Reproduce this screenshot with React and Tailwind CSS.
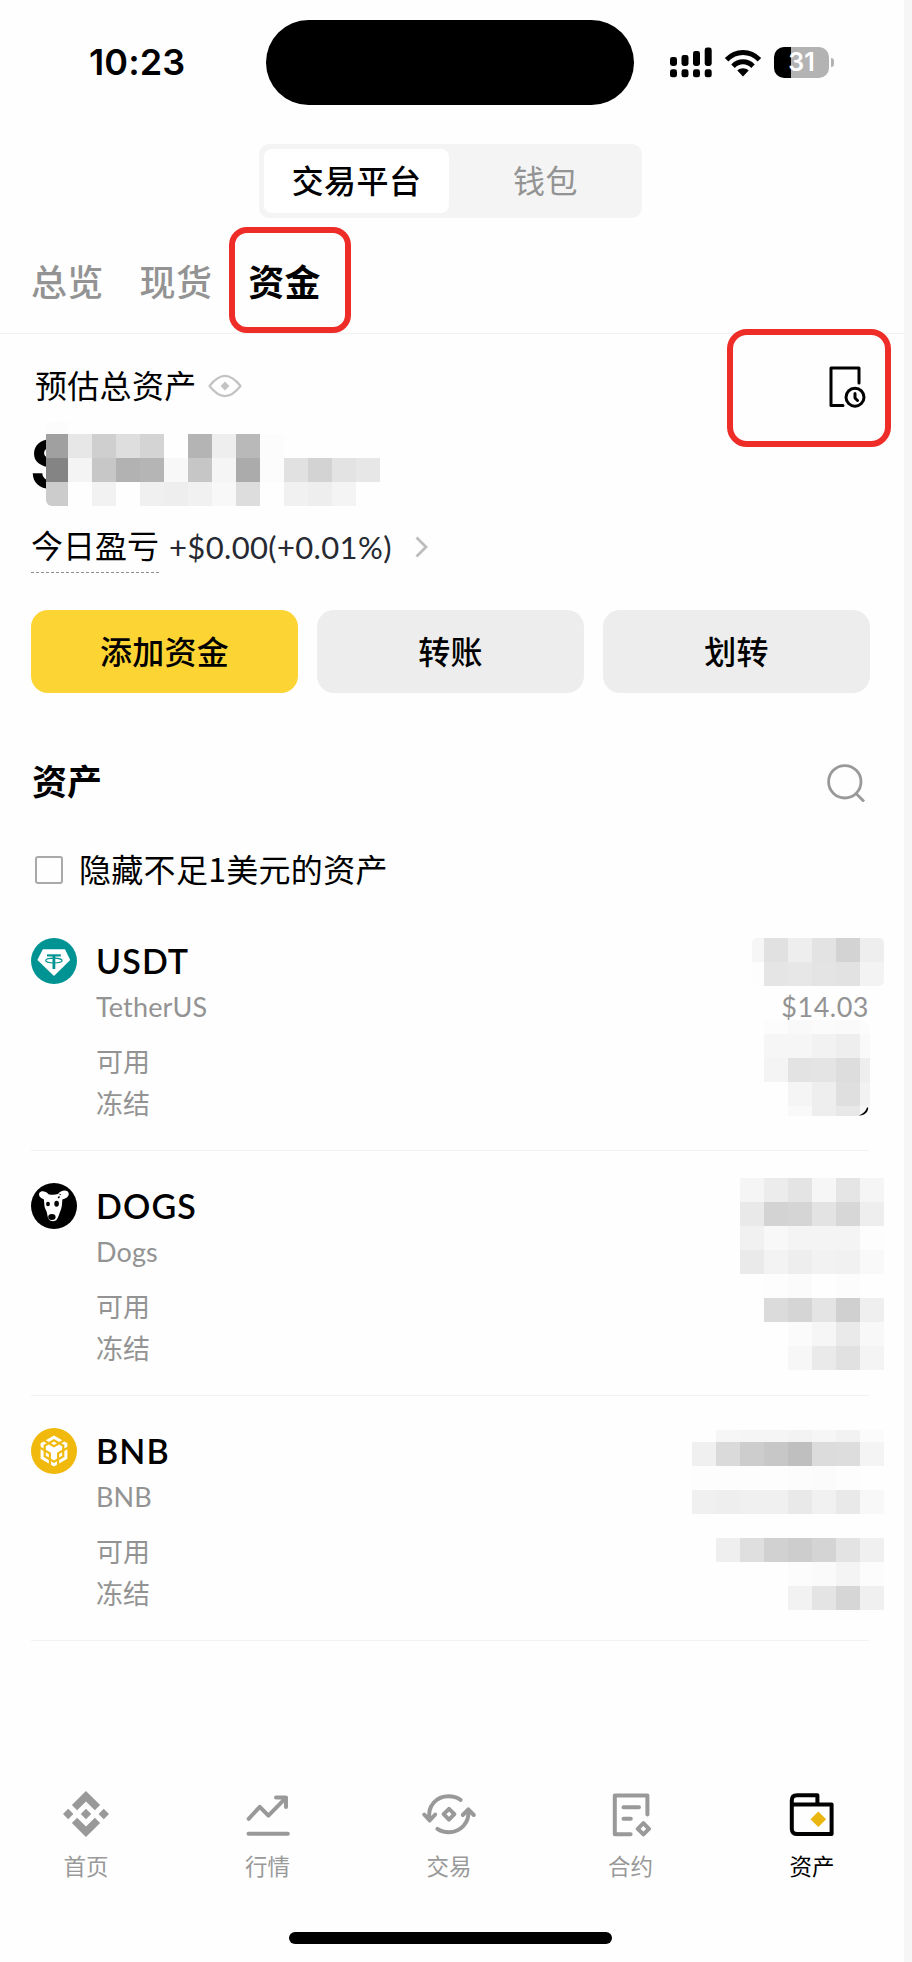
const CJK = 'font-["Noto_Sans_CJK_SC",sans-serif]';
const LATIN = 'font-["Lato","Noto_Sans_CJK_SC",sans-serif]';

// Each mosaic is a list of rows: [height, [[width, grey level or null], ...]]
const w24 = (levels) => levels.map((level) => [24, level]);

const BALANCE_MOSAIC = [
  [12, [[22, 252]]],
  [24, [[22, 160], ...w24([231, 207, 222, 212, null, 180, 238, 185, 252])]],
  [24, [[22, 132], ...w24([244, 199, 178, 181, 248, 198, 245, 171, 252, 225, 211, 227, 231])]],
  [24, [[22, 204], ...w24([254, 242, null, 240, 238, 241, 248, 221, null, 241, 238, 244])]],
];

const USDT_TOP = [
  [24, [[12, 246], ...w24([225, 238, 227, 211, 238])]],
  [24, [[12, 253], ...w24([229, 231, 228, 226, 243])]],
];

const USDT_BOTTOM = [
  [14, [...w24([252, 249, 251, 250]), [10, 252]]],
  [24, [...w24([246, 246, 242, 238]), [10, 249]]],
  [24, [...w24([244, 227, 228, 221]), [10, 238]]],
  [24, [...w24([null, 245, 238, 223]), [10, 242]]],
  [10, [...w24([null, 249, 238, 232]), [10, 246]]],
];

const DOGS_MOSAIC = [
  [24, w24([245, 236, 228, 246, 229, 245])],
  [24, w24([233, 211, 213, 227, 215, 238])],
  [24, w24([241, 248, 244, 244, 244, 253])],
  [24, w24([234, 243, 238, 242, 241, 249])],
  [24, w24([null, 253, 251, 254, 252, 254])],
  [24, w24([null, 219, 213, 228, 208, 239])],
  [24, w24([null, null, 251, 246, 234, 248])],
  [24, w24([null, null, 247, 234, 225, 244])],
];

const BNB_MOSAIC = [
  [12, w24([null, 246, 245, 245, 243, 246, 242, 251])],
  [24, w24([240, 218, 205, 199, 191, 220, 221, 244])],
  [24, w24([253, 253, 253, 253, 252, 251, 253, 254])],
  [24, w24([240, 238, 240, 240, 233, 241, 233, 248])],
  [24, w24([null])],
  [24, w24([null, 239, 223, 209, 205, 212, 227, 240])],
  [24, w24([null, 254, 254, 254, 252, 250, 244, 252])],
  [24, w24([null, null, null, null, 242, 228, 214, 240])],
];

function Mosaic({ rows, className }) {
  return (
    <div className={className}>
      {rows.map(([height, cells], r) => (
        <div key={r} className="flex" style={{ height }}>
          {cells.map(([width, level], c) => (
            <span
              key={c}
              className="block h-full shrink-0"
              style={{ width, backgroundColor: level === null ? undefined : `rgb(${level},${level},${level})` }}
            />
          ))}
        </div>
      ))}
    </div>
  );
}

function StatusBar() {
  return (
    <header className="flex h-[125px] items-center">
      <div className='w-[266px] pb-[2px] pl-[89px] font-["Inter",sans-serif] text-[36px] leading-none font-semibold tracking-[0.1px]'>10:23</div>
      <div className="h-[85px] w-[368px] rounded-full bg-black" />
      <svg className="ml-[36px]" width="42" height="31" viewBox="0 0 42 31">
        <rect x="0" y="10" width="7" height="9" rx="2.4" />
        <rect x="11.5" y="8" width="7" height="11" rx="2.4" />
        <rect x="23" y="4" width="7" height="15" rx="2.4" />
        <rect x="34.7" y="0.5" width="7" height="18.5" rx="2.4" />
        <rect x="0" y="22.3" width="7" height="8" rx="2.4" />
        <rect x="11.5" y="22.3" width="7" height="8" rx="2.4" />
        <rect x="23" y="22.3" width="7" height="8" rx="2.4" />
        <rect x="34.7" y="22.3" width="7" height="8" rx="2.4" />
      </svg>
      <svg className="ml-[12px]" width="38" height="28" viewBox="0 0 38 28" fill="none" stroke="#000" strokeWidth="5">
        <path d="M2.6 10.8C12 1.2 26 1.2 35.4 10.8" />
        <path d="M9 17.2C14.8 11.4 23.2 11.4 29 17.2" />
        <path d="M19 27.5L13.3 21.4C16.5 18.4 21.5 18.4 24.7 21.4Z" fill="#000" stroke="none" />
      </svg>
      <div className='ml-[12px] flex h-[31px] w-[55px] items-center justify-center rounded-[10px] bg-[linear-gradient(90deg,#000_31%,#b3b3b3_31%)] pb-[1px] font-["Inter",sans-serif] text-[25px] leading-none font-semibold text-white'>
        31
      </div>
      <div className="ml-[2px] h-[9px] w-[3px] rounded-r-full bg-[#b3b3b3]" />
    </header>
  );
}

function Segment() {
  return (
    <div className="mt-[19px] ml-[259px] flex h-[74px] w-[383px] rounded-[10px] bg-[#f4f4f4] py-[5px] pl-[5px] text-[32px] leading-none tracking-[0.4px]">
      <div className="flex w-[185px] items-center justify-center rounded-[8px] bg-white pb-[5px] font-medium">交易平台</div>
      <div className="flex flex-1 items-center justify-center pb-[5px] text-[#939393]">钱包</div>
    </div>
  );
}

function Tabs() {
  return (
    <nav className="flex h-[116px] items-center gap-[36px] border-b border-[#f1f1f1] pt-[9px] pl-[31px] text-[36px] leading-none font-medium tracking-[0.3px] text-[#939393]">
      <span>总览</span>
      <span>现货</span>
      <span className="relative font-bold text-black">
        资金
        <i className="absolute -top-[35px] -left-[19px] h-[106px] w-[122px] rounded-[18px] border-[6px] border-[#ef2d28]" />
      </span>
    </nav>
  );
}

function Balance() {
  return (
    <section className="relative">
      <div className="flex h-[100px] items-center pt-[4px] pl-[35px] text-[32px] leading-none">
        <span className="pb-[4px] tracking-[0.3px]">预估总资产</span>
        <svg className="ml-[11px]" width="34" height="24" viewBox="0 0 34 24" fill="none" stroke="#c3c3c3" strokeWidth="2.2">
          <path d="M1.5 12C7 5 11 1.9 17 1.9S27 5 32.5 12C27 19 23 22.1 17 22.1S7 19 1.5 12Z" strokeLinejoin="round" />
          <path d="M17 7.6L21.4 12L17 16.4L12.6 12Z" fill="#c3c3c3" stroke="none" />
        </svg>
        <svg className="mt-[2px] ml-[587px]" width="38" height="42" viewBox="0 0 38 42" fill="none" stroke="#000" strokeWidth="3" strokeLinecap="round" strokeLinejoin="round">
          <path d="M14 39.5H2V2H30V17" />
          <circle cx="26" cy="31.2" r="9" />
          <path d="M26 27.5V32L28.5 34.5" />
        </svg>
      </div>
      <i className="absolute -top-[5px] left-[727px] h-[118px] w-[164px] rounded-[20px] border-[6px] border-[#ef2d28]" />
      <div className="relative h-[72px]">
        <span className='block pl-[30px] font-["Inter",sans-serif] text-[66px] leading-[61px] font-bold'>$</span>
        <div className="absolute -top-[12px] left-[46px] h-[94px] w-[40px] bg-[#fefefe]" />
        <Mosaic rows={BALANCE_MOSAIC} className="absolute -top-[12px] left-[46px] overflow-hidden rounded-l-[6px]" />
      </div>
      <div className="flex h-[78px] items-center pl-[31px]">
        <span className="mt-[10px] border-b border-dashed border-[#8c8c8c] pb-[12px] text-[32px] leading-[32px]">今日盈亏</span>
        <span className='mt-[4px] ml-[10px] font-["Lato",sans-serif] text-[31px] leading-none tracking-[0.35px] text-[#262932]'>+$0.00(+0.01%)</span>
        <svg className="mt-[4px] ml-[23px]" width="14" height="22" viewBox="0 0 14 22" fill="none" stroke="#bdbdbd" strokeWidth="2.8">
          <path d="M1.5 1.5L11 11L1.5 20.5" />
        </svg>
      </div>
      <div className="mt-[26px] flex gap-[19px] pl-[31px] text-[32px] leading-none font-medium tracking-[0.2px]">
        <button className="h-[83px] w-[267px] rounded-[17px] bg-[#fcd434] pb-[4px]">添加资金</button>
        <button className="h-[83px] w-[267px] rounded-[17px] bg-[#ededed] pb-[4px]">转账</button>
        <button className="h-[83px] w-[267px] rounded-[17px] bg-[#ededed] pb-[4px]">划转</button>
      </div>
    </section>
  );
}

function TetherIcon() {
  return (
    <svg width="46" height="46" viewBox="0 0 46 46">
      <circle cx="23" cy="23" r="23" fill="#009393" />
      <path d="M11.8 11.3H34L39.2 22L23 38L6.4 22Z" fill="#fff" />
      <g stroke="#009393" fill="none">
        <path d="M16 17.4H29.8" strokeWidth="2.2" />
        <path d="M22.9 17V31" strokeWidth="2.8" />
        <ellipse cx="22.9" cy="22.6" rx="8.2" ry="2.4" strokeWidth="1.2" />
      </g>
    </svg>
  );
}

function DogsIcon() {
  return (
    <svg width="46" height="46" viewBox="0 0 46 46">
      <circle cx="23" cy="23" r="23" />
      <path
        d="M8.3 10C10 7.4 14.5 8 17.5 11.2C21 12 24 11.8 27 11C29 8 33.5 6.5 36.5 8.2C39 10.5 37.5 14 34.5 15.2C33 15.8 32 16 31.4 16.6C31 20 31.2 23.5 29.8 27C28.4 30 27.8 33.5 25.8 36.5C24 38.8 19.5 38.8 17.6 36C16 33 16.5 29.5 14.6 26.5C13 23.5 13.4 19.5 12.8 16.2C9.5 15.5 7.2 12.6 8.3 10Z"
        fill="#fff"
      />
      <ellipse cx="17" cy="21" rx="1.9" ry="2.3" />
      <ellipse cx="25.6" cy="20.7" rx="2.3" ry="3" />
      <ellipse cx="20.9" cy="34" rx="3.7" ry="3" />
      <path d="M27.3 15.2L28.4 13.4M28.8 11.7L29.4 11" stroke="#000" strokeWidth="1.5" />
    </svg>
  );
}

function BnbIcon() {
  return (
    <svg width="46" height="46" viewBox="0 0 46 46">
      <circle cx="23" cy="23" r="23" fill="#f0b90b" />
      <g transform="translate(7.5 7.5) scale(1.29)" fill="#fff">
        <path d="M5.631 3.676L12.001 0l6.367 3.676-2.34 1.358L12 2.716 7.972 5.034l-2.34-1.358z" />
        <path d="M18.368 8.312l-2.34-1.358L12 9.272 7.972 6.954l-2.34 1.358v2.716l4.026 2.318v4.636L12 19.341l2.341-1.359v-4.636l4.027-2.318V8.312z" />
        <path d="M18.368 15.664v-2.716l-2.34 1.358v2.716l2.34-1.358z" />
        <path d="M20.031 16.624l-4.027 2.318v2.717l6.368-3.677V10.63l-2.34 1.358v4.636z" />
        <path d="M17.691 5.994l2.34 1.358v2.716l2.341-1.358V5.994l-2.34-1.358-2.342 1.358z" />
        <path d="M9.657 19.926v2.716L12 24l2.341-1.358v-2.716l-2.34 1.358-2.343-1.358z" />
        <path d="M5.631 15.664l2.34 1.358v-2.716l-2.34-1.358v2.716z" />
        <path d="M9.657 5.994L12 7.352l2.341-1.358L12 4.636 9.657 5.994z" />
        <path d="M3.967 7.352l2.342-1.358-2.341-1.358-2.34 1.358v2.716l2.34 1.358V7.352z" />
        <path d="M3.967 11.988L1.627 10.63v7.352l6.368 3.677v-2.717L3.967 16.624v-4.636z" />
      </g>
    </svg>
  );
}

function Asset({ icon, symbol, name, amount, children }) {
  return (
    <li className="relative ml-[31px] flex h-[245px] w-[838px] border-b border-[#f2f2f2] pt-[32px]">
      {icon}
      <div className={`ml-[19px] flex flex-1 flex-col text-[27px] text-[#939393] ${LATIN}`}>
        <span className="h-[46px] text-[34px] leading-[46px] font-semibold tracking-[1.1px] text-black">{symbol}</span>
        <div className="flex h-[46px] justify-between leading-[46px]">
          <span className="tracking-[0.15px]">{name}</span>
          {amount && <span className="tracking-[0.5px]">{amount}</span>}
        </div>
        <span className={`mt-[10px] h-[42px] leading-[42px] ${CJK}`}>可用</span>
        <span className={`h-[42px] leading-[42px] ${CJK}`}>冻结</span>
      </div>
      {children}
    </li>
  );
}

function Assets() {
  return (
    <section>
      <div className="mt-[58px] flex h-[62px] items-center justify-between pr-[39px] pl-[32px]">
        <h2 className="pb-[5px] text-[35px] leading-none font-bold">资产</h2>
        <svg className="mt-[1px]" width="38" height="38" viewBox="0 0 38 38" fill="none" stroke="#999" strokeWidth="2.8">
          <circle cx="17.8" cy="17.8" r="16.2" />
          <path d="M29 29.5L37 37.5" />
        </svg>
      </div>
      <label className="mt-[26px] flex h-[62px] items-center pl-[35px] text-[32px] leading-none">
        <span className="h-[28px] w-[28px] rounded-[3px] border-2 border-[#a9a9a9]" />
        <span className="ml-[16px] pb-[5px] tracking-[0.3px]">隐藏不足1美元的资产</span>
      </label>
      <ul className="mt-[5px]">
        <Asset icon={<TetherIcon />} symbol="USDT" name="TetherUS" amount="$14.03">
          <Mosaic rows={USDT_TOP} className="absolute top-[32px] left-[721px] overflow-hidden rounded-[5px]" />
          <Mosaic rows={USDT_BOTTOM} className="absolute top-[114px] left-[733px] overflow-hidden rounded-r-[10px]" />
          <svg className="absolute top-[200px] left-[828px]" width="10" height="10" viewBox="0 0 10 10">
            <path d="M0 9.4C4 8 7 5 8 1.5H9.2C9.2 6 5.5 9.8 0 9.4Z" />
          </svg>
        </Asset>
        <Asset icon={<DogsIcon />} symbol="DOGS" name="Dogs">
          <Mosaic rows={DOGS_MOSAIC} className="absolute top-[27px] left-[709px]" />
        </Asset>
        <Asset icon={<BnbIcon />} symbol="BNB" name="BNB">
          <Mosaic rows={BNB_MOSAIC} className="absolute top-[34px] left-[661px]" />
        </Asset>
      </ul>
    </section>
  );
}

const stroke = { fill: "none", stroke: "currentColor", strokeWidth: 4, strokeLinecap: "round", strokeLinejoin: "round" };

const NAV = [
  {
    label: "首页",
    icon: (
      <svg width="46" height="46" viewBox="0 0 24 24" fill="currentColor">
        <path d="M16.624 13.9202l2.7175 2.7154-7.353 7.353-7.353-7.352 2.7175-2.7164 4.6355 4.6595 4.6356-4.6595zm4.6366-4.6366L24 12l-2.7154 2.7164L18.5682 12l2.6924-2.7164zm-9.272.001l2.7163 2.6914-2.7164 2.7174v-.001L9.2721 12l2.7164-2.7154zm-9.2722-.001L5.4088 12l-2.6914 2.6924L0 12l2.7164-2.7164zM11.9885.0115l7.353 7.329-2.7174 2.7154-4.6356-4.6356-4.6355 4.6595-2.7174-2.7154 7.353-7.353z" />
      </svg>
    ),
  },
  {
    label: "行情",
    icon: (
      <svg width="46" height="46" viewBox="0 0 46 46" {...stroke}>
        <path d="M3.7 27.8L14.8 15.8L23.4 24.6L40.6 7.2M31 6.6H41V16M3.5 42.7H42.8" />
      </svg>
    ),
  },
  {
    label: "交易",
    icon: (
      <svg width="56" height="46" viewBox="0 0 56 46" {...stroke}>
        <path d="M8.7 29.5C5.5 14.5 16 5.2 27.5 5.2C32 5.2 36.5 6.5 39.6 8.8M3.2 23.5L8.7 29.5L14.2 23.5" />
        <path d="M47.3 18.5C49 31.5 39.5 41.2 27.8 41.2C23.5 41.2 19.5 40 16.4 37.8M41.8 24L47.3 18.3L52.8 24" />
        <path d="M28 17.8L33.4 23.2L28 28.6L22.6 23.2Z" />
      </svg>
    ),
  },
  {
    label: "合约",
    icon: (
      <svg width="46" height="46" viewBox="0 0 46 46" {...stroke}>
        <path d="M22.6 43.2H6.8V4.6H39.4V23.6M15.5 16.2H31M15.5 27.7H22.8" />
        <path d="M35.4 32.2L41 37.8L35.4 43.4L29.8 37.8Z" />
      </svg>
    ),
  },
  {
    label: "资产",
    active: true,
    icon: (
      <svg width="46" height="46" viewBox="0 0 46 46" {...stroke}>
        <path d="M2.8 13.2V9.4C2.8 6 4.8 4.2 8 4.2H28.4V13.2M2.8 13.4H42.6V43H8C4.8 43 2.8 41.2 2.8 38Z" />
        <path d="M29.3 20.5L37.1 28.3L29.3 36.1L21.5 28.3Z" fill="#e9b60f" stroke="none" />
      </svg>
    ),
  },
];

function BottomNav() {
  return (
    <nav className="mt-[150px] flex justify-between pr-[37px] pl-[31px] text-[22.5px] leading-[32px] text-[#999]">
      {NAV.map(({ label, icon, active }) => (
        <a key={label} className={active ? "flex w-[110px] flex-col items-center gap-[12px] text-black" : "flex w-[110px] flex-col items-center gap-[12px]"}>
          {icon}
          <span>{label}</span>
        </a>
      ))}
    </nav>
  );
}

export default function App() {
  return (
    <div className={`flex h-[1962px] w-[912px] overflow-hidden bg-[#f6f6f6] text-black ${CJK}`}>
      <main className="h-full w-[904px] bg-[#fefefe]">
        <StatusBar />
        <Segment />
        <Tabs />
        <Balance />
        <Assets />
        <BottomNav />
        <div className="mt-[51px] ml-[289px] h-[12px] w-[323px] rounded-full bg-black" />
      </main>
    </div>
  );
}
